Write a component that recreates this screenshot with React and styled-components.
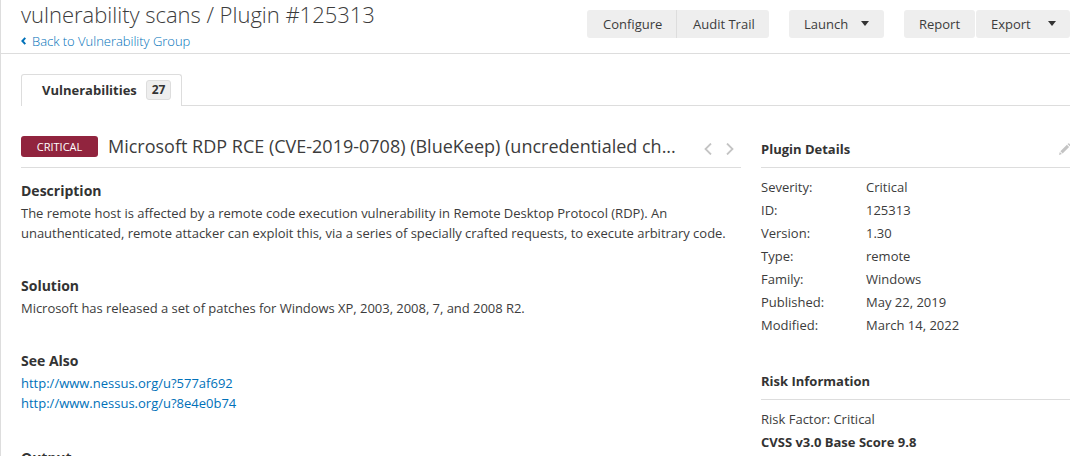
import React from "react";
import styled, { createGlobalStyle } from "styled-components";

const GlobalStyle = createGlobalStyle`
  * { box-sizing: border-box; }
  body {
    margin: 0;
    overflow: hidden;
    background: #fff;
    color: #3c3c3c;
    font: 400 13px/20px "Open Sans", "Noto Sans", sans-serif;
  }
`;

const Page = styled.div`
  height: 456px;
  overflow: hidden;
  border-left: 1px solid #ddd;
`;

const Header = styled.header`
  display: flex;
  justify-content: space-between;
  height: 54px;
  padding-left: 20px;
  border-bottom: 1px solid #ddd;
`;

const PageTitle = styled.h1`
  margin: 0 0 2px;
  font-size: 22px;
  font-weight: 300;
  letter-spacing: -0.02px;
  line-height: 28px;
  white-space: nowrap;
`;

const BackLink = styled.a`
  display: flex;
  align-items: center;
  gap: 6px;
  height: 22px;
  color: #0071b9;
  font-weight: 300;
  letter-spacing: -0.02px;
`;

const Actions = styled.div`
  display: flex;
  padding-top: 10px;
`;

const Button = styled.button`
  display: flex;
  align-items: center;
  width: ${(p) => p.$width}px;
  height: 28px;
  margin: 0 0 0 ${(p) => p.$gap || 0}px;
  padding: 0 0 0 ${(p) => p.$inset || 15}px;
  border: 0;
  border-right: ${(p) => (p.$joined === "left" ? "1px solid #ddd" : "0")};
  border-radius: ${(p) =>
    p.$joined === "left" ? "3px 0 0 3px" : p.$joined === "right" ? "0 3px 3px 0" : "3px"};
  background: #eee;
  color: #3c3c3c;
  font: inherit;
  white-space: nowrap;
`;

const Caret = styled.i`
  margin: -2px 0 0 ${(p) => p.$gap}px;
  border: 4.5px solid transparent;
  border-top: 5px solid #333;
  border-bottom: 0;
`;

const TabBar = styled.nav`
  display: flex;
  height: 32px;
  margin: 20px 0 0 20px;
`;

const Tab = styled.div`
  display: flex;
  align-items: center;
  justify-content: space-between;
  width: 161px;
  padding: 0 10px 1px 20px;
  border: 1px solid #ddd;
  border-bottom: 0;
  border-radius: 3px 3px 0 0;
  color: #333;
  font-weight: 700;
`;

const TabRule = styled.div`
  flex: 1;
  border-bottom: 1px solid #ddd;
`;

const Count = styled.span`
  width: 25px;
  height: 20px;
  border: 1px solid #ddd;
  border-radius: 3px;
  background: #eee;
  font-size: 12px;
  line-height: 18px;
  text-align: center;
`;

const Content = styled.main`
  display: grid;
  grid-template-columns: 720px 309px;
  column-gap: 20px;
  padding: 20px 0 0 20px;
`;

const FindingHeader = styled.div`
  display: flex;
  align-items: center;
  height: 42px;
  margin-bottom: 11px;
  border-bottom: 1px solid #ddd;
`;

const SeverityBadge = styled.span`
  width: 77px;
  height: 21px;
  margin-right: 10px;
  border-radius: 3px;
  background: #91243e;
  color: #fff;
  font-size: 11px;
  line-height: 21px;
  text-align: center;
`;

const FindingTitle = styled.h2`
  width: 570px;
  margin: 0 0 2px;
  overflow: hidden;
  font-size: 18px;
  font-weight: 400;
  line-height: 28px;
  white-space: nowrap;
`;

const Pager = styled.div`
  display: flex;
  gap: 14px;
  margin: 5px 0 0 26px;
`;

const Section = styled.section`
  margin-bottom: ${(p) => p.$after || 31}px;
`;

const SectionTitle = styled.h3`
  margin: 0;
  color: #333;
  font-size: 14px;
  font-weight: 700;
  line-height: 24px;
`;

const Line = styled.div`
  letter-spacing: ${(p) => p.$tracking}px;
  white-space: nowrap;
`;

const ExternalLink = styled.a`
  display: block;
  color: #0071b9;
`;

const PanelTitle = styled.h3`
  display: flex;
  align-items: center;
  justify-content: space-between;
  height: ${(p) => p.$height}px;
  margin: 0 0 8px;
  padding-top: ${(p) => p.$top || 0}px;
  padding-bottom: ${(p) => p.$bottom || 0}px;
  border-bottom: 1px solid #ddd;
  color: #333;
  font-size: 13px;
  font-weight: 700;
`;

const Row = styled.div`
  display: grid;
  grid-template-columns: 105px 1fr;
  line-height: 23px;
`;

const Details = styled.div`
  margin-bottom: 31px;
`;

const RiskLine = styled.div`
  color: ${(p) => (p.$strong ? "#333" : "inherit")};
  font-weight: ${(p) => (p.$strong ? 700 : 400)};
  line-height: 23px;
`;

const Chevron = ({ direction }) => (
  <svg width="8" height="12" viewBox="0 0 8 12" fill="none" stroke="#c4c4c4" strokeWidth="1.8">
    <path d={direction === "left" ? "M7 .5 1.5 6 7 11.5" : "M1 .5 6.5 6 1 11.5"} />
  </svg>
);

const BackArrow = () => (
  <svg width="5" height="8" viewBox="0 0 5 8" fill="none" stroke="#0071b9" strokeWidth="2">
    <path d="M4.3.8 1.4 4l2.9 3.2" />
  </svg>
);

const Pencil = () => (
  <svg width="11" height="12" viewBox="0 0 11 12" fill="#c4c4c4">
    <path d="M0 12 .8 8.9 2.9 11.1ZM1.4 8.2 7.9 1.7 10.1 3.9 3.6 10.4ZM8.5 1.1 9.2.4Q9.7 0 10.2.4L11 1.2V3L10.7 3.3Z" />
  </svg>
);

const details = [
  ["Severity:", "Critical"],
  ["ID:", "125313"],
  ["Version:", "1.30"],
  ["Type:", "remote"],
  ["Family:", "Windows"],
  ["Published:", "May 22, 2019"],
  ["Modified:", "March 14, 2022"],
];

export default function App() {
  return (
    <Page>
      <GlobalStyle />
      <Header>
        <div>
          <PageTitle>vulnerability scans / Plugin #125313</PageTitle>
          <BackLink><BackArrow />Back to Vulnerability Group</BackLink>
        </div>
        <Actions>
          <Button $width={90} $inset={16} $joined="left">Configure</Button>
          <Button $width={92} $inset={16} $joined="right">Audit Trail</Button>
          <Button $width={95} $gap={20}>Launch<Caret $gap={13} /></Button>
          <Button $width={71} $gap={20}>Report</Button>
          <Button $width={94} $gap={1}>Export<Caret $gap={17} /></Button>
        </Actions>
      </Header>
      <TabBar>
        <Tab>Vulnerabilities<Count>27</Count></Tab>
        <TabRule />
      </TabBar>
      <Content>
        <div>
          <FindingHeader>
            <SeverityBadge>CRITICAL</SeverityBadge>
            <FindingTitle>Microsoft RDP RCE (CVE-2019-0708) (BlueKeep) (uncredentialed ch...</FindingTitle>
            <Pager><Chevron direction="left" /><Chevron direction="right" /></Pager>
          </FindingHeader>
          <Section>
            <SectionTitle>Description</SectionTitle>
            <Line $tracking={-0.012}>The remote host is affected by a remote code execution vulnerability in Remote Desktop Protocol (RDP). An</Line>
            <Line $tracking={-0.022}>unauthenticated, remote attacker can exploit this, via a series of specially crafted requests, to execute arbitrary code.</Line>
          </Section>
          <Section>
            <SectionTitle>Solution</SectionTitle>
            <Line $tracking={-0.034}>Microsoft has released a set of patches for Windows XP, 2003, 2008, 7, and 2008 R2.</Line>
          </Section>
          <Section $after={33}>
            <SectionTitle>See Also</SectionTitle>
            <ExternalLink>http://www.nessus.org/u?577af692</ExternalLink>
            <ExternalLink>http://www.nessus.org/u?8e4e0b74</ExternalLink>
          </Section>
          <Section>
            <SectionTitle>Output</SectionTitle>
          </Section>
        </div>
        <aside>
          <Details>
            <PanelTitle $height={42} $top={5}>Plugin Details<Pencil /></PanelTitle>
            {details.map(([label, value]) => (
              <Row key={label}><span>{label}</span><span>{value}</span></Row>
            ))}
          </Details>
          <PanelTitle $height={32} $bottom={6}>Risk Information</PanelTitle>
          <RiskLine>Risk Factor: Critical</RiskLine>
          <RiskLine $strong>CVSS v3.0 Base Score 9.8</RiskLine>
        </aside>
      </Content>
    </Page>
  );
}
